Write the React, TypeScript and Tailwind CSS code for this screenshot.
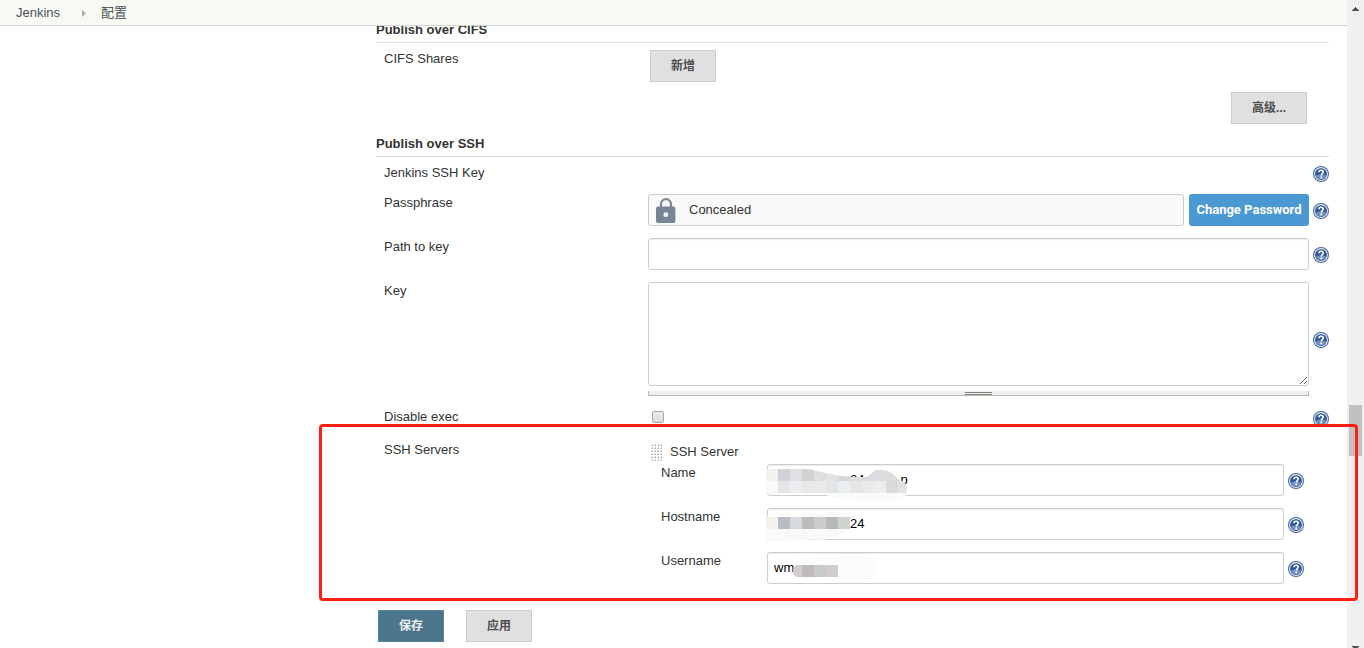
import { useState } from 'react'
import type { ReactNode } from 'react'

function HelpLink({ topic, className = '' }: { topic: string; className?: string }) {
  return (
    <a href="#help" aria-label={`Help: ${topic}`} className={`block size-4 shrink-0 ${className}`}>
      <svg viewBox="0 0 16 16" className="size-4">
        <circle cx="8" cy="8" r="8" fill="#44699f" />
        <circle cx="8" cy="8" r="6.4" fill="#3c639f" stroke="#e6ecf5" strokeWidth="1.1" />
        <circle cx="8" cy="8" r="5.5" fill="#34599a" />
        <path d="M3 9.5a5.2 5.2 0 0 0 10 0c-3-1.4-7-1.4-10 0z" fill="#7391c2" />
        <path
          d="M6 6.2c0-1.3 1-1.9 2.1-1.9s2.1.6 2.1 1.8c0 1.5-1.9 1.5-1.9 3.3"
          fill="none"
          stroke="#fff"
          strokeWidth="1.6"
        />
        <rect x="7.4" y="10.5" width="1.8" height="1.8" fill="#fff" />
      </svg>
    </a>
  )
}

function LockIcon() {
  return (
    <svg viewBox="0 0 20 25" className="h-[25px] w-5 shrink-0">
      <path d="M5 10V6.2a5 5 0 0 1 10 0V10" fill="none" stroke="#788594" strokeWidth="2.2" />
      <rect x="0" y="8.5" width="19.4" height="16.5" rx="2" fill="#788594" />
      <circle cx="9.8" cy="16.7" r="2.4" fill="#f9f9f9" />
    </svg>
  )
}

function DragGrip() {
  const rows = [0, 3, 6, 9, 12, 15]
  const cols = [0, 3, 6, 9]
  return (
    <svg viewBox="0 0 12 18" className="mt-px h-[18px] w-3 shrink-0">
      {rows.map((y) =>
        cols.map((x) => (
          <path key={`${x}-${y}`} d={`M${x} ${y + 1}h1v-1h1v2h-2z`} fill="#c4c4be" />
        ))
      )}
    </svg>
  )
}

const nameTiles = [
  ['#f5f2ec', '#d1d1d9', '#e1e1e4', '#d2d0d2', '#dedee0', '#e2e2e2', '#d5d8d6', '#dedede', '#d9dae3', '#dddddd', '#dddcdc', '#dddbdb'],
  ['#faf9f8', '#e5e5e8', '#ebedf0', '#e8e8ea', '#e9e9e9', '#e1e5e4', '#ebeef2', '#e8e5e6', '#e9ebea', '#ebeeed', '#dddada', '#e0e3e2'],
]
const hostTiles = ['#f5f2ec', '#b9bbc5', '#d8d9dc', '#bebcbb', '#d0cbcb', '#b6b9b8', '#cfd2d2']
const userTiles = ['#cfcdce', '#bfbabd', '#c6cac8', '#d2cbd0']

function NameMask() {
  return (
    <svg viewBox="0 0 150 40" className="pointer-events-none absolute -left-px top-0 h-10 w-[150px]">
      <clipPath id="name-mask">
        <path d="M0 5h36c14 0 28 7 50 8h14c4-1 5-4 8-6 7-3 17-1 23 7 2 2 3 2 5 3 6 3 6 12 2 17-6 4-42 4-66 0-14-3-20-5-34-5H0z" />
      </clipPath>
      <g clipPath="url(#name-mask)">
        <rect width="150" height="40" fill="#fafafa" />
        {nameTiles.map((row, r) =>
          row.map((c, i) => <rect key={`${r}-${i}`} x={i * 12} y={5 + r * 12} width="12" height="12" fill={c} />)
        )}
      </g>
    </svg>
  )
}

function HostMask() {
  return (
    <svg viewBox="0 0 90 34" className="pointer-events-none absolute -left-px top-0 h-[34px] w-[90px]">
      <path d="M0 9h40c10-3 20-5 30-5s14 3 14 8-3 12-9 14-10 5-18 6c-20-1-40 2-57 2z" fill="#f9f9f9" />
      {hostTiles.map((c, i) => (
        <rect key={i} x={i * 12} y="9" width="12" height="12" fill={c} />
      ))}
    </svg>
  )
}

function UserMask() {
  return (
    <svg viewBox="0 0 120 34" className="pointer-events-none absolute -left-px top-0 h-[34px] w-[120px]">
      <path d="M30 8c25-4 60-5 78-3 6 4 5 18-3 22-20 3-50 0-70 1-8-4-9-14-5-20z" fill="#fcfcfc" />
      <path d="M36 13h-6c-4 3-4 9 0 12h6z" fill={userTiles[0]} />
      {userTiles.slice(1).map((c, i) => (
        <rect key={i} x={36 + i * 12} y="13" width="12" height="12" fill={c} />
      ))}
    </svg>
  )
}

const inputClass =
  'block h-8 w-full min-w-0 rounded-[3px] border border-[#ccc] bg-white px-1.5 pb-0.5 text-black shadow-[inset_0_1px_1px_rgba(0,0,0,0.08)] outline-none'
const buttonClass = 'h-8 border border-[#ccc] bg-[#e0e0e0] px-5 text-xs font-bold text-[#4d4d4d]'

function SectionTitle({ children }: { children: ReactNode }) {
  return <h2 className="border-b border-[#ddd] pb-[3px] font-bold">{children}</h2>
}

function Row({ label, htmlFor, children }: { label: string; htmlFor?: string; children?: ReactNode }) {
  return (
    <div className="flex pl-2">
      {htmlFor ? (
        <label htmlFor={htmlFor} className="w-[264px] shrink-0 self-start">{label}</label>
      ) : (
        <span className="w-[264px] shrink-0">{label}</span>
      )}
      <div className="flex min-w-0 flex-1 gap-1">{children}</div>
    </div>
  )
}

interface ServerFieldProps {
  id: string
  label: string
  initial: string
  indent?: string
  mask: ReactNode
}

function ServerField({ id, label, initial, indent = '', mask }: ServerFieldProps) {
  const [value, setValue] = useState(initial)
  return (
    <div className="flex">
      <label htmlFor={id} className="w-[106px] shrink-0 self-start">{label}</label>
      <div className="relative min-w-0 flex-1">
        <input
          id={id}
          type="text"
          value={value}
          onChange={(e) => setValue(e.target.value)}
          className={`${inputClass} ${indent}`}
        />
        {mask}
      </div>
      <HelpLink topic={label} className="ml-1 mt-[9px]" />
    </div>
  )
}

function ScrollTrack() {
  return (
    <div aria-hidden="true" className="flex w-[17px] shrink-0 flex-col items-center bg-[#f0f0f0]">
      <svg viewBox="0 0 17 17" className="size-[17px] shrink-0">
        <path d="M5 11h7v-1h-1v-1h-1v-1h-1v-1h-1v1h-1v1h-1v1h-1z" fill="#505050" />
      </svg>
      <div className="grow-[388]" />
      <div className="h-[51px] w-[13px] shrink-0 bg-[#c1c1c1]" />
      <div className="grow-[190]" />
      <svg viewBox="0 0 7 2" className="h-0.5 w-[7px] shrink-0">
        <path d="M0 0h7v1h-1v1h-5v-1h-1z" fill="#505050" />
      </svg>
    </div>
  )
}

export default function App() {
  const [disableExec, setDisableExec] = useState(false)

  return (
    <div className="flex h-screen overflow-hidden bg-white font-['Liberation_Sans','Noto_Sans_CJK_SC',sans-serif] text-[13px] leading-[18px] text-[#333]">
      <div className="min-w-0 flex-1">
        <nav className="relative z-10 flex h-[26px] items-center border-b border-[#d3d7cf] bg-[#f6faf2] pl-4 text-[#4d545d]">
          <a href="#jenkins">Jenkins</a>
          <svg viewBox="0 0 4 7" className="ml-[22px] mr-[15px] mt-0.5 h-[7px] w-1">
            <path d="M0 0l4 3.5-4 3.5z" fill="#aaa" />
          </svg>
          <a href="#configure">配置</a>
        </nav>

        <main className="-mt-[5px] pl-[376px] pr-[18px]">
          <form onSubmit={(e) => e.preventDefault()}>
            <SectionTitle>Publish over CIFS</SectionTitle>
            <div className="mb-[11px] mt-[7px] flex flex-col gap-2.5">
              <Row label="CIFS Shares">
                <button type="button" className={`${buttonClass} ml-0.5`}>新增</button>
              </Row>
              <button type="button" className={`${buttonClass} mr-[22px] self-end`}>高级...</button>
            </div>

            <SectionTitle>Publish over SSH</SectionTitle>
            <div className="mt-[7px] flex flex-col gap-3">
              <Row label="Jenkins SSH Key">
                <HelpLink topic="Jenkins SSH Key" className="ml-auto mt-0.5" />
              </Row>
              <Row label="Passphrase">
                <div className="flex h-8 min-w-0 flex-1 items-center gap-3 rounded-[3px] border border-[#ccc] bg-[#f9f9f9] pl-[7px]">
                  <LockIcon />
                  <span className="ml-px">Concealed</span>
                </div>
                <button
                  type="button"
                  className="ml-px h-8 w-[120px] shrink-0 rounded-[3px] bg-[#4b99d2] font-[Roboto,sans-serif] text-[13px] font-bold text-white"
                >
                  Change Password
                </button>
                <HelpLink topic="Passphrase" className="mt-[9px]" />
              </Row>
              <Row label="Path to key" htmlFor="key-path">
                <input id="key-path" type="text" className={inputClass} />
                <HelpLink topic="Path to key" className="mt-[9px]" />
              </Row>
              <Row label="Key" htmlFor="key">
                <div className="min-w-0 flex-1">
                  <textarea
                    id="key"
                    className="block h-[104px] w-full resize-y rounded-[3px] border border-[#ccc] bg-white p-1.5 outline-none"
                  />
                  <div className="mt-[5px] flex h-[5px] items-center justify-center border-x border-b border-[#b8b8b0] bg-[#eee]">
                    <div className="h-[3px] w-[27px] border-y border-[#84857c]" />
                  </div>
                </div>
                <HelpLink topic="Key" className="mt-[50px]" />
              </Row>
              <div className="pb-0.5">
                <Row label="Disable exec" htmlFor="disable-exec">
                  <input
                    id="disable-exec"
                    type="checkbox"
                    checked={disableExec}
                    onChange={(e) => setDisableExec(e.target.checked)}
                    className="ml-1 mt-[3px] size-3 appearance-none rounded-[2px] border border-[#a9a9a9] bg-linear-to-b from-[#ececec] to-[#dcdcdc] checked:from-[#4b99d2] checked:to-[#4b99d2]"
                  />
                  <HelpLink topic="Disable exec" className="ml-auto mt-[3px]" />
                </Row>
              </div>
              <div className="relative">
                <Row label="SSH Servers">
                  <div className="min-w-0 flex-1 pl-[3px] pr-[25px] pt-0.5">
                    <div className="flex h-[21px] gap-[7px]">
                      <DragGrip />
                      <span>SSH Server</span>
                    </div>
                    <div className="flex flex-col gap-3 pl-2.5">
                      <ServerField
                        id="server-name"
                        label="Name"
                        initial={'24' + '\u00a0'.repeat(10) + 'p'}
                        indent="pl-[82px]"
                        mask={<NameMask />}
                      />
                      <ServerField
                        id="server-host"
                        label="Hostname"
                        initial="24"
                        indent="pl-[82px]"
                        mask={<HostMask />}
                      />
                      <ServerField id="server-user" label="Username" initial="wm" mask={<UserMask />} />
                    </div>
                  </div>
                </Row>
                <div className="pointer-events-none absolute -bottom-[17px] -left-[57px] -right-[29px] -top-[17px] rounded-[4px] border-[3px] border-[#ff1e12]" />
              </div>
            </div>

            <div className="ml-0.5 mt-[26px] flex gap-[22px]">
              <button type="submit" className="h-8 border border-[#5788a0] bg-[#4b758b] px-5 text-xs font-bold text-[#eee]">
                保存
              </button>
              <button type="button" className={buttonClass}>应用</button>
            </div>
          </form>
        </main>
      </div>
      <ScrollTrack />
    </div>
  )
}
